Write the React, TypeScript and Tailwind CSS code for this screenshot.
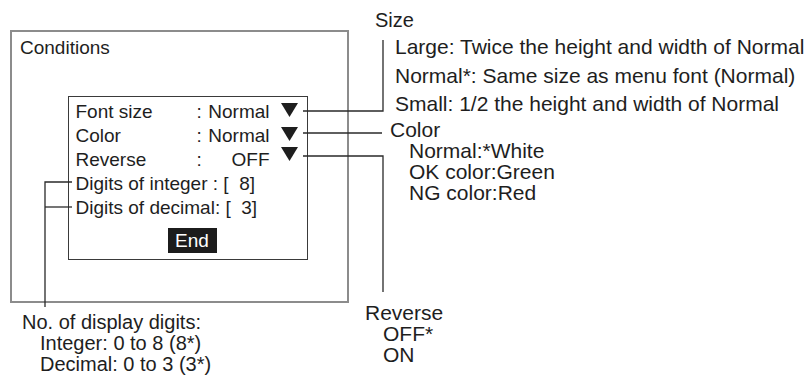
const ink = "#1e1e1e";

function Tri({ mt }: { mt: string }) {
  return (
    <svg width="17" height="14" viewBox="0 0 17 14" className={`ml-[11px] shrink-0 ${mt}`}>
      <polygon points="0,0 17,0 8.5,14" fill={ink} />
    </svg>
  );
}

function SelectRow({ label, value, mt }: { label: string; value: string; mt: string }) {
  return (
    <div className="flex items-start h-[24px] leading-[24px]">
      <span className="w-[121px]">{label}</span>
      <span className="w-[5px]">:</span>
      <span className="w-[68px] text-right">{value}</span>
      <Tri mt={mt} />
    </div>
  );
}

function Leaders() {
  return (
    <svg
      className="absolute left-0 top-0 pointer-events-none"
      width="811"
      height="376"
      viewBox="0 0 811 376"
      fill="none"
      stroke="#2a2a2a"
      strokeWidth="1.3"
    >
      {/* size */}
      <polyline points="303,111 383,111 383,40" />
      {/* color */}
      <polyline points="303,133 382,133" />
      {/* reverse */}
      <polyline points="303,156 383,156 383,292" />
      {/* digits */}
      <polyline points="72,182 45,182 45,307" />
      <polyline points="72,207 45,207" />
    </svg>
  );
}

export default function App() {
  return (
    <div
      className="relative w-[811px] h-[376px] bg-white overflow-hidden text-[#1e1e1e]"
      style={{ fontFamily: '"Liberation Sans", Arial, sans-serif' }}
    >
      <div className="pt-[30px] pl-[10px]">
        <div className="w-[339px] h-[273px] border-2 border-[#8c8c8c]">
          <div className="pl-[8px] pt-[4px] text-[19px] leading-[24px]">Conditions</div>

          <div className="ml-[56px] mt-[36px] w-[240px] h-[164px] border-[1.5px] border-[#3a3a3a] pl-[6.5px] pt-[2.5px] text-[19px]">
            <SelectRow label="Font size" value="Normal" mt="mt-[3px]" />
            <SelectRow label="Color" value="Normal" mt="mt-[3px]" />
            <SelectRow label="Reverse" value="OFF" mt="mt-[-1px]" />
            <div className="h-[24px] leading-[24px] whitespace-pre">Digits of integer : [  8]</div>
            <div className="h-[24px] leading-[24px] whitespace-pre">Digits of decimal: [  3]</div>
            <div className="ml-[92px] mt-[8px] w-[49px] h-[25px] bg-[#1c1c1c] text-white text-[19px] leading-[25px] text-center">
              End
            </div>
          </div>
        </div>
      </div>

      {/* callouts */}
      <div className="absolute left-[375px] top-[8px] text-[20px] leading-[24px]">Size</div>
      <div className="absolute left-[395px] top-[33px] text-[21px] leading-[28.5px] whitespace-nowrap">
        <div>Large: Twice the height and width of Normal</div>
        <div>Normal*: Same size as menu font (Normal)</div>
        <div>Small: 1/2 the height and width of Normal</div>
      </div>

      <div className="absolute left-[390px] top-[119px] text-[21px] leading-[21px] whitespace-nowrap">
        <div>Color</div>
        <div className="pl-[19px]">
          <div>Normal:*White</div>
          <div>OK color:Green</div>
          <div>NG color:Red</div>
        </div>
      </div>

      <div className="absolute left-[365px] top-[302px] text-[21px] leading-[21px] whitespace-nowrap">
        <div>Reverse</div>
        <div className="pl-[18px]">
          <div>OFF*</div>
          <div>ON</div>
        </div>
      </div>

      <div className="absolute left-[22px] top-[312px] text-[20px] leading-[21px] whitespace-nowrap">
        <div>No. of display digits:</div>
        <div className="pl-[18px]">
          <div>Integer: 0 to 8 (8*)</div>
          <div>Decimal: 0 to 3 (3*)</div>
        </div>
      </div>

      <Leaders />
    </div>
  );
}
